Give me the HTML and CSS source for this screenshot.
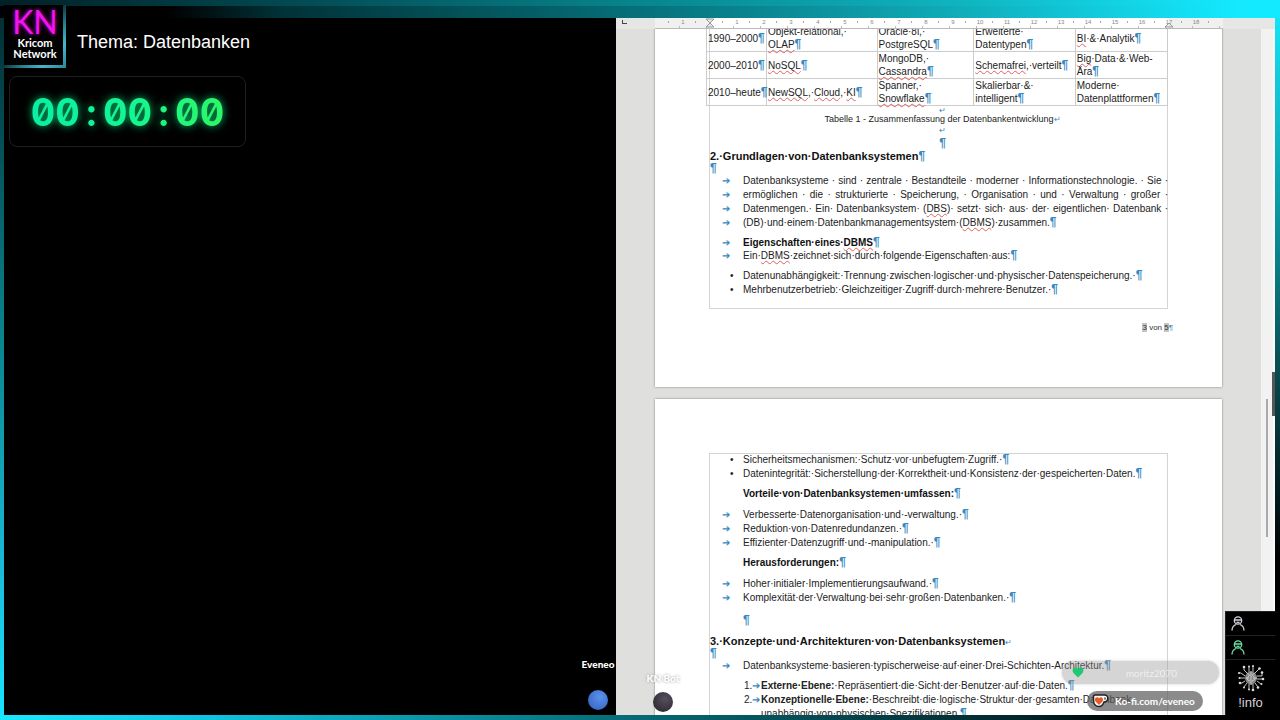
FILE: index.html
```html
<!DOCTYPE html>
<html lang="de">
<head>
<meta charset="utf-8">
<title>Thema: Datenbanken</title>
<link rel="stylesheet" href="styles.css">
</head>
<body>
<div class="stage">
  <section class="left">
    <header class="brand">
      <div class="logo"><div class="logo-inner"><strong class="kn">KN</strong><span class="network">Kricom<br>Network</span></div></div>
      <h1 class="topic">Thema: Datenbanken</h1>
    </header>
    <div class="timer"><span class="digits">00<span class="colon">:</span>00<span class="colon">:</span>00</span></div>
  </section>

  <section class="writer">
    <div class="ruler">
      <span class="tab-corner"></span>
      <svg class="scale" width="568" height="11" viewBox="0 0 568 11" aria-hidden="true">
        <defs><pattern id="ticks" x="-12" y="0" width="27" height="11" patternUnits="userSpaceOnUse"><rect x="25" y="3" width="1" height="2" fill="#aaa"/><rect x="9" y="8" width="1" height="2" fill="#bbb"/></pattern></defs>
        <rect width="568" height="10" fill="#f0f0f0"/>
        <rect x="55" width="459" height="10" fill="#fff"/>
        <rect width="568" height="11" fill="url(#ticks)"/>
        <path d="M0 10.500H568" stroke="#bbb"/>
        <g class="nums">
          <text x="28" y="6">1</text><text x="82" y="6">1</text><text x="109" y="6">2</text><text x="136" y="6">3</text><text x="163" y="6">4</text><text x="190" y="6">5</text><text x="217" y="6">6</text><text x="244" y="6">7</text><text x="271" y="6">8</text><text x="298" y="6">9</text><text x="325" y="6">10</text><text x="352" y="6">11</text><text x="379" y="6">12</text><text x="406" y="6">13</text><text x="433" y="6">14</text><text x="460" y="6">15</text><text x="487" y="6">16</text><text x="514" y="6">17</text><text x="541" y="6">18</text>
        </g>
        <path d="M51 1h8l-4 4zM51 9l4-4 4 4zM510 9l4-4 4 4z" fill="#e8e8e8" stroke="#999"/>
      </svg>
    </div>
    <div class="view">
      <main class="canvas">
        <article class="page first">
          <div class="frame">
            <table class="history">
              <colgroup><col class="c1"><col class="c2"><col class="c3"><col class="c4"><col class="c5"></colgroup>
              <tbody>
              <tr><td>1990–2000<i>¶</i></td><td>Objekt-relational,·<br><u>OLAP</u><i>¶</i></td><td>Oracle·8i,·<br>PostgreSQL<i>¶</i></td><td>Erweiterte·<br>Datentypen<i>¶</i></td><td><u>BI</u>·&amp;·Analytik<i>¶</i></td></tr>
              <tr><td>2000–2010<i>¶</i></td><td><u>NoSQL</u><i>¶</i></td><td>MongoDB,·<br><u>Cassandra</u><i>¶</i></td><td><u>Schemafrei</u>,·verteilt<i>¶</i></td><td><u>Big</u>·Data·&amp;·Web-<br>Ära<i>¶</i></td></tr>
              <tr><td>2010–heute<i>¶</i></td><td><u>NewSQL</u>,·<u>Cloud</u>,·<u>KI</u><i>¶</i></td><td>Spanner,·<br><u>Snowflake</u><i>¶</i></td><td>Skalierbar·&amp;·<br>intelligent<i>¶</i></td><td>Moderne·<br>Datenplattformen<i>¶</i></td></tr>
              </tbody>
            </table>
            <p class="caption"><i>↵</i></p>
            <p class="caption">Tabelle 1 - Zusammenfassung der Datenbankentwicklung<i>↵</i></p>
            <p class="caption"><i>↵</i></p>
            <p class="center"><i>¶</i></p>
            <h2>2.·Grundlagen·von·Datenbanksystemen<i>¶</i></h2>
            <p class="empty"><i>¶</i></p>
            <div class="line wide"><b class="mark">➔</b><p>Datenbanksysteme · sind · zentrale · Bestandteile · moderner · Informationstechnologie. · Sie ·</p></div>
            <div class="line wide"><b class="mark">➔</b><p>ermöglichen · die · strukturierte · Speicherung, · Organisation · und · Verwaltung · großer ·</p></div>
            <div class="line wide"><b class="mark">➔</b><p>Datenmengen.· Ein· Datenbanksystem· (<u>DBS</u>)· setzt· sich· aus· der· eigentlichen· Datenbank ·</p></div>
            <div class="line"><b class="mark">➔</b><p>(DB)·und·einem·Datenbankmanagementsystem·(<u>DBMS</u>)·zusammen.<i>¶</i></p></div>
            <div class="line tight gap"><b class="mark">➔</b><h3>Eigenschaften·eines·<u>DBMS</u><i>¶</i></h3></div>
            <div class="line tight"><b class="mark">➔</b><p>Ein·<u>DBMS</u>·zeichnet·sich·durch·folgende·Eigenschaften·aus:<i>¶</i></p></div>
            <ul class="gap">
              <li class="line"><b class="mark dot">•</b><p>Datenunabhängigkeit:·Trennung·zwischen·logischer·und·physischer·Datenspeicherung.·<i>¶</i></p></li>
              <li class="line"><b class="mark dot">•</b><p>Mehrbenutzerbetrieb:·Gleichzeitiger·Zugriff·durch·mehrere·Benutzer.·<i>¶</i></p></li>
            </ul>
          </div>
          <footer class="page-no"><span class="field">3</span> von <span class="field">5</span><i>¶</i></footer>
        </article>

        <article class="page second">
          <div class="frame">
            <ul>
              <li class="line"><b class="mark dot">•</b><p>Sicherheitsmechanismen:·Schutz·vor·unbefugtem·Zugriff.·<i>¶</i></p></li>
              <li class="line"><b class="mark dot">•</b><p>Datenintegrität:·Sicherstellung·der·Korrektheit·und·Konsistenz·der·gespeicherten·Daten.<i>¶</i></p></li>
            </ul>
            <h3 class="indent gap">Vorteile·von·Datenbanksystemen·umfassen:<i>¶</i></h3>
            <ul class="gap">
              <li class="line"><b class="mark">➔</b><p>Verbesserte·Datenorganisation·und·-verwaltung.·<i>¶</i></p></li>
              <li class="line"><b class="mark">➔</b><p>Reduktion·von·Datenredundanzen.·<i>¶</i></p></li>
              <li class="line"><b class="mark">➔</b><p>Effizienter·Datenzugriff·und·-manipulation.·<i>¶</i></p></li>
            </ul>
            <h3 class="indent gap">Herausforderungen:<i>¶</i></h3>
            <ul class="gap">
              <li class="line"><b class="mark">➔</b><p>Hoher·initialer·Implementierungsaufwand.·<i>¶</i></p></li>
              <li class="line"><b class="mark">➔</b><p>Komplexität·der·Verwaltung·bei·sehr·großen·Datenbanken.·<i>¶</i></p></li>
            </ul>
            <p class="indent spacer"><i>¶</i></p>
            <h2 class="section">3.·Konzepte·und·Architekturen·von·Datenbanksystemen<i class="ret">↵</i></h2>
            <p class="empty"><i>¶</i></p>
            <div class="line"><b class="mark">➔</b><p>Datenbanksysteme·basieren·typischerweise·auf·einer·Drei-Schichten-Architektur.<i>¶</i></p></div>
            <ol class="gap">
              <li class="line"><span class="num">1.<b>➔</b></span><p><strong>Externe·Ebene:</strong>·Repräsentiert·die·Sicht·der·Benutzer·auf·die·Daten.<i>¶</i></p></li>
              <li class="line"><span class="num">2.<b>➔</b></span><p><strong>Konzeptionelle·Ebene:</strong>·Beschreibt·die·logische·Struktur·der·gesamten·Datenbank·<br>unabhängig·von·physischen·Spezifikationen.<i>¶</i></p></li>
            </ol>
          </div>
        </article>
      </main>
      <aside class="scroll"><span class="thumb"></span><span class="handle"></span></aside>
    </div>
  </section>

  <div class="viewer eveneo"><span>Eveneo</span><span class="ball"></span></div>
  <div class="viewer bot"><span>KN Bot</span><span class="ball"></span></div>

  <div class="pill follower">
    <svg width="12" height="11" viewBox="0 0 12 11" aria-hidden="true"><path d="M6 10.500L1.500 6C-1 3 2-.8 5 1l1 1 1-1c3-1.800 6 2 3.500 5z" fill="#1fc873"/></svg>
    <span>moritz2070</span>
  </div>
  <a class="pill kofi" href="#">
    <svg width="17" height="16" viewBox="0 0 17 16" aria-hidden="true"><path d="M3 2h9c5-.5 5 6.500 0 7-1 3-3 4.500-5 4.500C3 13.500 1.500 11 1.500 7V3.500Q1.500 2 3 2z" fill="#fff" stroke="#222" stroke-width="1.500"/><path d="M12.500 4.300c1.800 0 1.600 2.700 0 2.700z" fill="#222"/><path d="M7 12L3.500 8.500C1.500 5.500 5 3 7 5.200 9 3 12.500 5.500 10.500 8.500z" fill="#ed5a28"/></svg>
    <span>Ko-fi.com/eveneo</span>
  </a>

  <aside class="stats">
    <div class="stat"><svg width="14" height="15" viewBox="0 0 14 15" aria-hidden="true"><use href="#person"/></svg></div>
    <div class="stat green"><svg width="14" height="15" viewBox="0 0 14 15" aria-hidden="true"><g id="person" fill="none" stroke="currentColor" stroke-width="1.300"><circle cx="7" cy="4.500" r="3.700"/><path d="M4 4h6M5.500 6q1.500 1 3 0M1 14.500c0-3 1.500-5 4-6M13 14.500c0-3-1.500-5-4-6"/></g></svg></div>
    <div class="info">
      <svg width="28" height="28" viewBox="0 0 28 28" aria-hidden="true">
        <ellipse cx="14" cy="14" rx="6" ry="6.500" fill="#888"/>
        <g fill="none" stroke="#c4c4c4" stroke-width="1">
          <path d="M14 7v14M10 9q4 2 1 4t2 4M18 9q-4 2-1 4t-2 4M9 14h3M16 14h4"/>
          <path d="M12 8V3M16 8V2M10 9L7 6V3M18 9l4-4M8 12L4 9H2M20 12h5V9M8 14H3M20 15h6M8 17l-3 2H3M20 17l4 3M10 19l-3 4M18 19l3 4M12 20v5M16 20v6"/>
        </g>
        <g fill="#ddd"><circle cx="12" cy="2.500" r="1"/><circle cx="16" cy="2" r="1"/><circle cx="7" cy="3" r="1.300"/><circle cx="22.500" cy="4.500" r="1.300"/><circle cx="2" cy="9" r="1"/><circle cx="25" cy="8.500" r="1.300"/><circle cx="2.500" cy="14" r="1"/><circle cx="26" cy="15" r="1.300"/><circle cx="3" cy="19" r="1.300"/><circle cx="24.500" cy="20" r="1"/><circle cx="7" cy="23.500" r="1"/><circle cx="21" cy="23.500" r="1.300"/><circle cx="12" cy="25.500" r="1"/><circle cx="16" cy="26" r="1.300"/></g>
      </svg>
      <span>!info</span>
    </div>
  </aside>
</div>
</body>
</html>
```
FILE: styles.css
```css
* { box-sizing: border-box; }
body { margin: 0; background: #000; font-family: "Liberation Sans", Arial, sans-serif; }
h1, h2, h3, p, ul, ol { margin: 0; padding: 0; list-style: none; font-weight: normal; }

/* Glowing frame: one gradient strip per edge */
.stage {
  position: relative;
  display: grid;
  grid-template-columns: 612fr 659fr;
  height: 100vh;
  overflow: hidden;
  padding: 18px 5px 5px 4px;
  background:
    linear-gradient(90deg, #1ae8ff, #10c4e0 16%, #06707a 47%, #054e58 62%, #02252b 80%, #000 88%) bottom / 100% 5px no-repeat,
    linear-gradient(90deg, #012026, #02444c 20%, #07868e 50%, #0fb4c0 75%, #14eaff 97%) top / 100% 6px no-repeat,
    linear-gradient(90deg, #000, #000 13%, #013238 22%, #06707a 50%, #10adba 75%, #14eaff 97%) top / 100% 18px no-repeat,
    linear-gradient(#022a30, #0a8a94 50%, #1ab9d6 78%, #18e6ff) left / 4px 100% no-repeat,
    linear-gradient(#14eaff, #0b9ca6 28%, #085055 50%, #022226 66%, #000 78%) right / 5px 100% no-repeat,
    #000;
}

/* Left side */
.left { background: #000; min-width: 0; }
.brand { display: flex; align-items: center; gap: 11px; margin-top: -13px; }
.logo { padding: 0 3px 3px 0; background: linear-gradient(135deg, #011 40%, #2a8698 65%, #46b6cc 80%, #2a8698); }
.logo-inner { display: flex; flex-direction: column; align-items: center; width: 59px; height: 60px; padding: 2px 0 0 3px; background: #000; color: #fff; }
.kn { font: 400 32px/30px Lato, "Open Sans", sans-serif; color: #f312f0; text-shadow: 0 0 4px #c0c; }
.network { font: 700 11px/11px Lato, "Open Sans", sans-serif; text-align: center; }
.topic { color: #fff; font-size: 18px; line-height: 24px; padding-top: 10px; }
.timer { display: flex; align-items: center; justify-content: center; width: 237px; height: 71px; margin: 8px 0 0 5px; border: 1px solid #1f1f1f; border-radius: 8px; }
.digits {
  font: 700 38px/48px Inter, "DejaVu Sans Mono", monospace;
  font-feature-settings: "zero" 1, "tnum" 1;
  color: transparent;
  background: linear-gradient(90deg, #08f0a4, #14f594 50%, #2ef765);
  background-clip: text;
  -webkit-background-clip: text;
  filter: drop-shadow(0 0 4px #00c46c);
}
.colon { display: inline-block; width: 23px; text-align: center; }

/* Document window */
.writer { display: flex; flex-direction: column; min-width: 0; min-height: 0; background: #dfdfdd; overflow: hidden; }
.ruler { display: flex; height: 11px; flex: none; background: #e6e6e5; }
.tab-corner { width: 5px; height: 4px; margin: 2px 28px 0 6px; border: solid #444; border-width: 0 0 1px 1px; }
.scale { flex: none; }
.nums { font: 6px "Liberation Sans", sans-serif; fill: #888; text-anchor: middle; }
.view { display: flex; flex: 1; min-height: 0; overflow: hidden; }
.canvas { flex: 1; min-width: 0; padding: 0 39px; }
.page { background: #fff; box-shadow: 0 0 2px #777; padding: 0 54px; }
.second { margin-top: 12px; padding-top: 54px; }
.frame { color: #222; font-size: 10px; line-height: 14px; white-space: nowrap; box-shadow: inset 0 0 0 1px #d4d4d4; }
.first .frame { padding-bottom: 12px; }
i { font-style: normal; color: #3989bf; }
.frame i { font-size: 12px; font-weight: bold; line-height: 0; }
u { text-decoration: underline wavy #e06060 1px; text-underline-offset: 1px; text-decoration-skip-ink: none; }

.history { width: calc(100% + 3px); margin: -5px 0 0 -3px; border-collapse: collapse; table-layout: fixed; line-height: 13px; }
.history td { height: 27px; padding: 0 1px; border: 1px solid #ccc; vertical-align: middle; }
.c1 { width: 13%; }
.c2 { width: 24%; }
.c3 { width: 21%; }
.c4 { width: 22%; }
.c5 { width: 20%; }

.caption { text-align: center; font-size: 9px; line-height: 11px; padding-left: 8px; }
.history + .caption { line-height: 8px; }
.frame .caption i { font-size: 8px; font-weight: normal; }
.center { text-align: center; line-height: 13px; padding-left: 8px; margin-top: 1px; }
h2 { font-size: 11px; line-height: 13px; font-weight: bold; color: #111; padding-left: 1px; }
h3 { font-weight: bold; color: #111; font-size: 10px; }
.empty { line-height: 11px; padding-left: 1px; }
.line { display: flex; }
.line > p, .line > h3 { flex: 1; min-width: 0; }
.wide > p { text-align: justify; text-align-last: justify; }
.tight { line-height: 13px; }
.gap { margin-top: 6px; }
ul.gap, .section { margin-top: 7px; }
.spacer { margin-top: 9px; }
.mark { flex: none; width: 34px; padding-left: 13px; color: #3989bf; font-weight: normal; }
.dot { padding-left: 21px; color: #222; }
.indent { padding-left: 34px; }
.num { flex: none; width: 52px; padding-left: 35px; }
.num b { color: #3989bf; font-weight: normal; }
.frame i.ret { font-size: 8px; font-weight: normal; }
.page-no { text-align: right; color: #333; font-size: 8px; line-height: 10px; padding: 14px 0 54px; margin-right: -5px; }
.field { background: #c4c4c4; }

.scroll { position: relative; flex: none; width: 14px; background: #f2f2f2; border-right: 2px solid #fafafa; }
.thumb { position: absolute; left: 5px; top: 54%; width: 2px; height: 20%; background: #aaaaac; }
.handle { position: absolute; right: -2px; top: 50%; width: 3px; height: 44px; background: #555; }

/* Stream overlays */
.viewer { position: absolute; display: flex; flex-direction: column; align-items: center; width: 60px; color: #fff; font: 900 10px/14px Lato, "Open Sans", sans-serif; }
.ball { width: 20px; height: 20px; border-radius: 50%; }
.eveneo { left: 568px; bottom: 10px; gap: 19px; }
.eveneo .ball { background: radial-gradient(circle at 60% 35%, #5c92ea, #3768c8 80%); }
.bot { left: 633px; bottom: 8px; gap: 7px; text-shadow: 0 0 3px #999; }
.bot .ball { background: radial-gradient(circle at 60% 35%, #56505c, #2e2a34 80%); }
.pill { position: absolute; display: flex; align-items: center; border-radius: 12px; color: #fff; text-decoration: none; }
.follower { right: 61px; bottom: 36px; width: 157px; height: 23px; padding-left: 10px; background: rgba(150, 150, 150, .4); box-shadow: 0 0 3px #ccc; font: 10px/14px Lato, sans-serif; }
.follower span { flex: 1; text-align: center; opacity: .6; }
.kofi { right: 77px; bottom: 9px; width: 116px; height: 20px; padding-left: 5px; gap: 6px; background: rgba(90, 90, 90, .7); font: 700 10px/14px Lato, sans-serif; }
.stats { position: absolute; right: 5px; bottom: 5px; width: 50px; background: #000; color: #d8d0dc; border: 1px solid #222; border-width: 1px 0 0 1px; }
.stat { height: 24px; padding: 4px 5px; border-bottom: 1px solid #222; }
.stat svg { display: block; }
.green { color: #6fe0a4; }
.info { display: flex; flex-direction: column; align-items: center; padding: 4px 0 2px; font-size: 13px; line-height: 21px; }
```
